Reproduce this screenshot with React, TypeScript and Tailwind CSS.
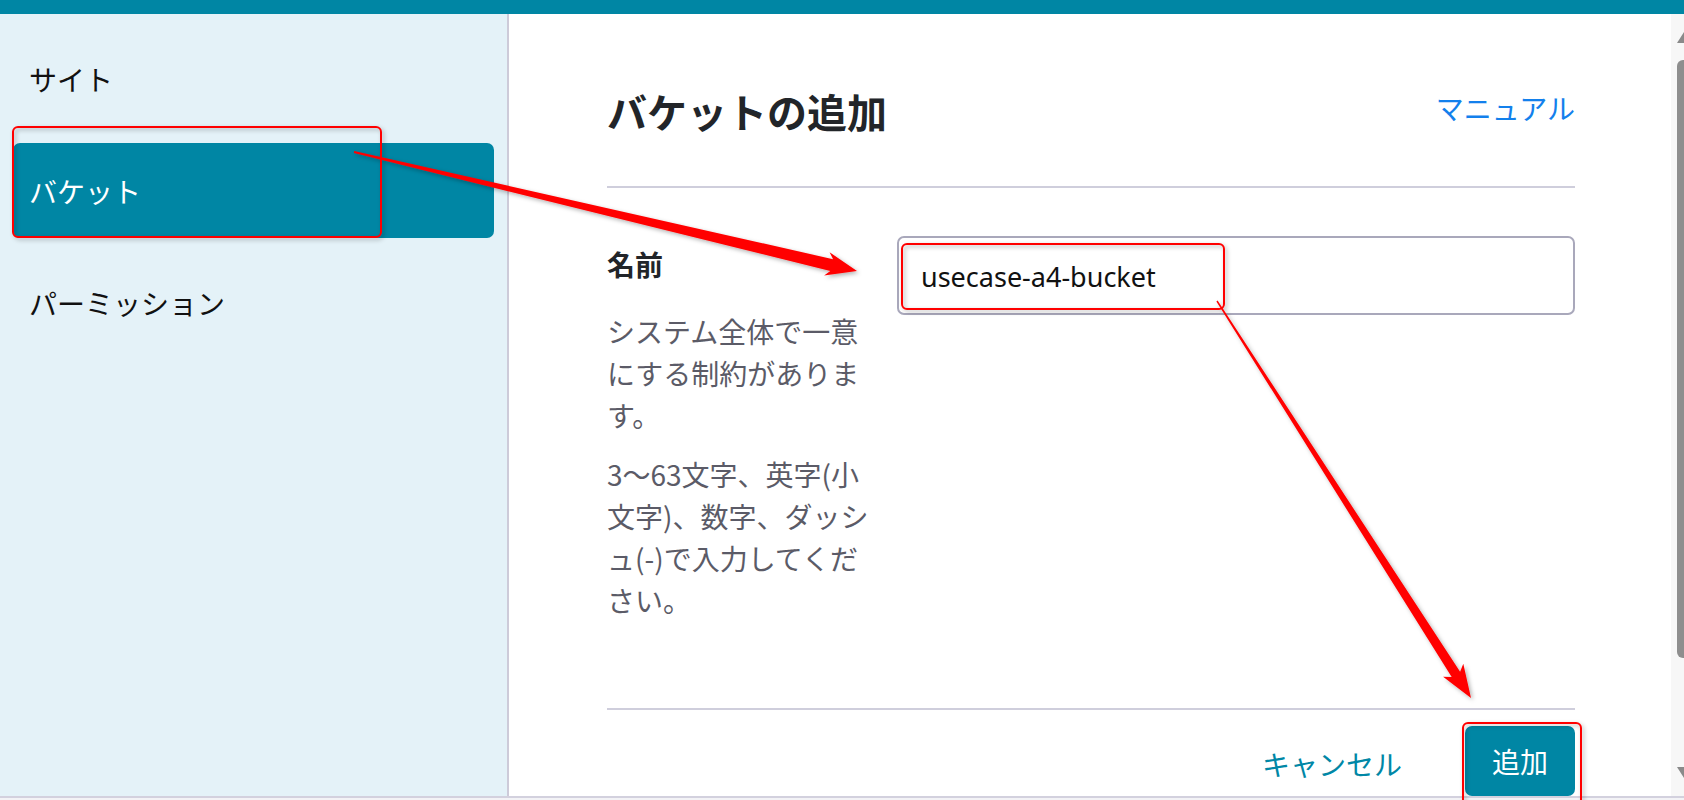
import React from "react";

function arrowPoints(
  sx: number,
  sy: number,
  tx: number,
  ty: number,
  w0: number,
  w1: number,
  hl: number,
  hw: number
): string {
  const dx = tx - sx;
  const dy = ty - sy;
  const L = Math.hypot(dx, dy);
  const ux = dx / L;
  const uy = dy / L;
  const nx = -uy;
  const ny = ux;
  const bx = tx - ux * hl;
  const by = ty - uy * hl;
  const wx = bx - ux * 5;
  const wy = by - uy * 5;
  const pts: [number, number][] = [
    [sx + (nx * w0) / 2, sy + (ny * w0) / 2],
    [bx + (nx * w1) / 2, by + (ny * w1) / 2],
    [wx + nx * hw, wy + ny * hw],
    [tx, ty],
    [wx - nx * hw, wy - ny * hw],
    [bx - (nx * w1) / 2, by - (ny * w1) / 2],
    [sx - (nx * w0) / 2, sy - (ny * w0) / 2],
  ];
  return pts.map((p) => `${p[0].toFixed(1)},${p[1].toFixed(1)}`).join(" ");
}

function Annotations() {
  return (
    <svg
      className="absolute inset-0 pointer-events-none"
      width={1684}
      height={800}
      viewBox="0 0 1684 800"
    >
      <defs>
        <filter id="sh" x="-20%" y="-20%" width="140%" height="140%">
          <feDropShadow dx="2" dy="2" stdDeviation="2" floodColor="#000" floodOpacity="0.3" />
        </filter>
      </defs>
      <g filter="url(#sh)">
        <rect x={13} y={127} width={368} height={110} rx={5} fill="none" stroke="#ff0000" strokeWidth={2} />
        <rect x={902} y={244} width={322} height={65} rx={5} fill="none" stroke="#ff0000" strokeWidth={2} />
        <rect x={1463} y={723} width={118} height={90} rx={5} fill="none" stroke="#ff0000" strokeWidth={2} />
        <polygon points={arrowPoints(354, 152, 857, 271, 2, 12, 26, 12)} fill="#ff0000" />
        <polygon points={arrowPoints(1217, 301, 1471, 698, 1.5, 10, 28, 12)} fill="#ff0000" />
      </g>
    </svg>
  );
}

export default function App() {
  return (
    <div
      className="relative w-[1684px] h-[800px] overflow-hidden bg-white flex flex-col"
      style={{ fontFamily: "'Noto Sans CJK JP', 'Noto Sans', sans-serif" }}
    >
      <div className="h-[14px] shrink-0 bg-[#0086a4]" />
      <div className="flex flex-1 min-h-0 border-b-2 border-[#d3d1de]">
        <aside className="w-[509px] shrink-0 bg-[#e4f2f8] border-r-2 border-[#cdcbd9] pt-[17px] px-[13px] flex flex-col gap-[17px]">
          <div className="h-[95px] flex items-center pl-[16px] text-[28px] text-[#111]">サイト</div>
          <div className="h-[95px] flex items-center pl-[16px] text-[28px] text-white bg-[#0086a4] rounded-[7px]">
            バケット
          </div>
          <div className="h-[95px] flex items-center pl-[16px] text-[28px] text-[#111]">パーミッション</div>
        </aside>

        <main className="flex-1 min-w-0 pl-[98px] pr-[96px] pt-[67px] flex flex-col">
          <div className="flex items-center justify-between h-[60px]">
            <h1 className="text-[40px] leading-[60px] font-bold text-[#222529]">バケットの追加</h1>
            <a className="text-[28px] leading-[42px] text-[#1380ec] mb-[6px]">マニュアル</a>
          </div>
          <div className="mt-[45px] h-[2px] bg-[#cfcedc]" />

          <div className="mt-[48px] flex items-start gap-[24px]">
            <div className="w-[266px] shrink-0 pt-[7px]">
              <div className="text-[28px] leading-[42px] font-bold text-[#222529]">名前</div>
              <p className="mt-[25px] text-[28px] leading-[42px] text-[#5b5b67]">
                システム全体で一意にする制約があります。
              </p>
              <p className="mt-[17px] text-[28px] leading-[42px] text-[#5b5b67]">
                3〜63文字、英字(小文字)、数字、ダッシュ(-)で入力してください。
              </p>
            </div>
            <div className="flex-1 h-[79px] border-2 border-[#a9a8bb] rounded-[7px] flex items-center pl-[22px] pt-[4px]">
              <span
                className="text-[27px] text-[#111]"
                style={{ fontFamily: "'Noto Sans', 'Noto Sans CJK JP', sans-serif" }}
              >
                usecase-a4-bucket
              </span>
            </div>
          </div>

          <div className="flex-1" />
          <div className="h-[2px] bg-[#cfcedc]" />
          <div className="mt-[16px] h-[70px] flex items-center justify-end gap-[63px]">
            <span className="text-[28px] text-[#0087a6] mt-[6px]">キャンセル</span>
            <button className="w-[110px] h-[70px] rounded-[7px] bg-[#0086a4] text-white text-[28px]">
              追加
            </button>
          </div>
        </main>

        <div className="w-[13px] shrink-0 bg-[#f7f7f7] flex flex-col items-end">
          <svg width="7" height="11" viewBox="0 0 7 11" className="mt-[18px]">
            <polygon points="0,11 7,0 7,11" fill="#8a8a8a" />
          </svg>
          <div className="mt-[17px] w-[7px] h-[598px] bg-[#8e8e8e] rounded-l-[6px]" />
          <div className="flex-1" />
          <svg width="7" height="11" viewBox="0 0 7 11" className="mb-[18px]">
            <polygon points="0,0 7,0 7,11" fill="#8a8a8a" />
          </svg>
        </div>
      </div>
      <div className="h-[2px] shrink-0 bg-[#f3f3f6]" />
      <Annotations />
    </div>
  );
}
